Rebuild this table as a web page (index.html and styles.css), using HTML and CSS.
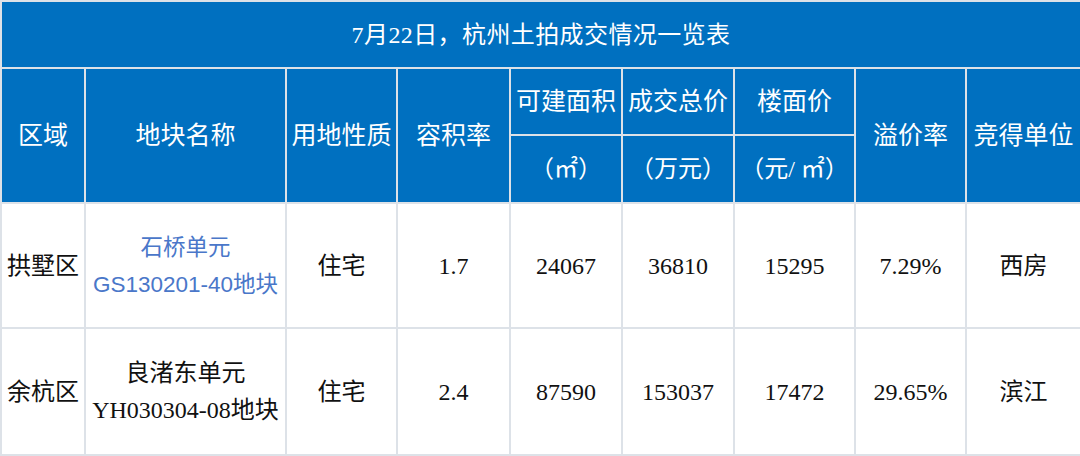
FILE: index.html
```html
<!DOCTYPE html>
<html lang="zh-CN">
<head>
<meta charset="utf-8">
<title>7月22日，杭州土拍成交情况一览表</title>
<link rel="stylesheet" href="styles.css">
</head>
<body>
<table class="sheet">
  <colgroup>
    <col class="c1"><col class="c2"><col class="c3"><col class="c4"><col class="c5"><col class="c6"><col class="c7"><col class="c8"><col class="c9">
  </colgroup>
  <thead>
    <tr class="r-title"><th colspan="9" class="title">7月22日，杭州土拍成交情况一览表</th></tr>
    <tr class="r-h1">
      <th rowspan="2">区域</th>
      <th rowspan="2">地块名称</th>
      <th rowspan="2">用地性质</th>
      <th rowspan="2">容积率</th>
      <th>可建面积</th>
      <th>成交总价</th>
      <th>楼面价</th>
      <th rowspan="2">溢价率</th>
      <th rowspan="2">竞得单位</th>
    </tr>
    <tr class="r-h2">
      <th class="unit">（㎡）</th>
      <th class="unit">（万元）</th>
      <th class="unit">（元/ ㎡）</th>
    </tr>
  </thead>
  <tbody>
    <tr class="r-b1">
      <td>拱墅区</td>
      <td class="name link"><span class="line">石桥单元</span><span class="line">GS130201-40地块</span></td>
      <td>住宅</td>
      <td>1.7</td>
      <td>24067</td>
      <td>36810</td>
      <td>15295</td>
      <td>7.29%</td>
      <td>西房</td>
    </tr>
    <tr class="r-b2">
      <td>余杭区</td>
      <td class="name"><span class="line">良渚东单元</span><span class="line">YH030304-08地块</span></td>
      <td>住宅</td>
      <td>2.4</td>
      <td>87590</td>
      <td>153037</td>
      <td>17472</td>
      <td>29.65%</td>
      <td>滨江</td>
    </tr>
  </tbody>
</table>
</body>
</html>
```
FILE: styles.css
```css
html, body {
  margin: 0;
  padding: 0;
  background: #ffffff;
}

.sheet {
  width: 1080px;
  table-layout: fixed;
  border-collapse: collapse;
  font-family: "Liberation Serif", "Noto Sans CJK SC", serif;
  color: #111111;
}

.c1 { width: 84px; }
.c2 { width: 201px; }
.c3 { width: 111px; }
.c4 { width: 113px; }
.c5 { width: 112px; }
.c6 { width: 112px; }
.c7 { width: 121px; }
.c8 { width: 111px; }
.c9 { width: 115px; }

.sheet th,
.sheet td {
  border: 2px solid #dde2e8;
  padding: 0;
  text-align: center;
  vertical-align: middle;
  overflow: hidden;
  white-space: nowrap;
}

.sheet th {
  background: #0070c0;
  color: #ffffff;
  font-weight: normal;
  font-size: 25px;
  line-height: 30px;
}

.sheet th.title {
  font-size: 24px;
  letter-spacing: 0.4px;
}

.sheet th.unit {
  font-size: 24px;
}

.r-title { height: 67px; }
.r-h1 { height: 67px; }
.r-h2 { height: 68px; }
.r-b1 { height: 125px; }
.r-b2 { height: 127px; }

.sheet td {
  font-size: 24px;
  line-height: 30px;
}

.sheet td.name {
  line-height: 37px;
}

.line {
  display: block;
}

.sheet td.link {
  color: #4a77c9;
  font-family: "Liberation Sans", "Noto Sans CJK SC", sans-serif;
  font-size: 22.5px;
}
```
